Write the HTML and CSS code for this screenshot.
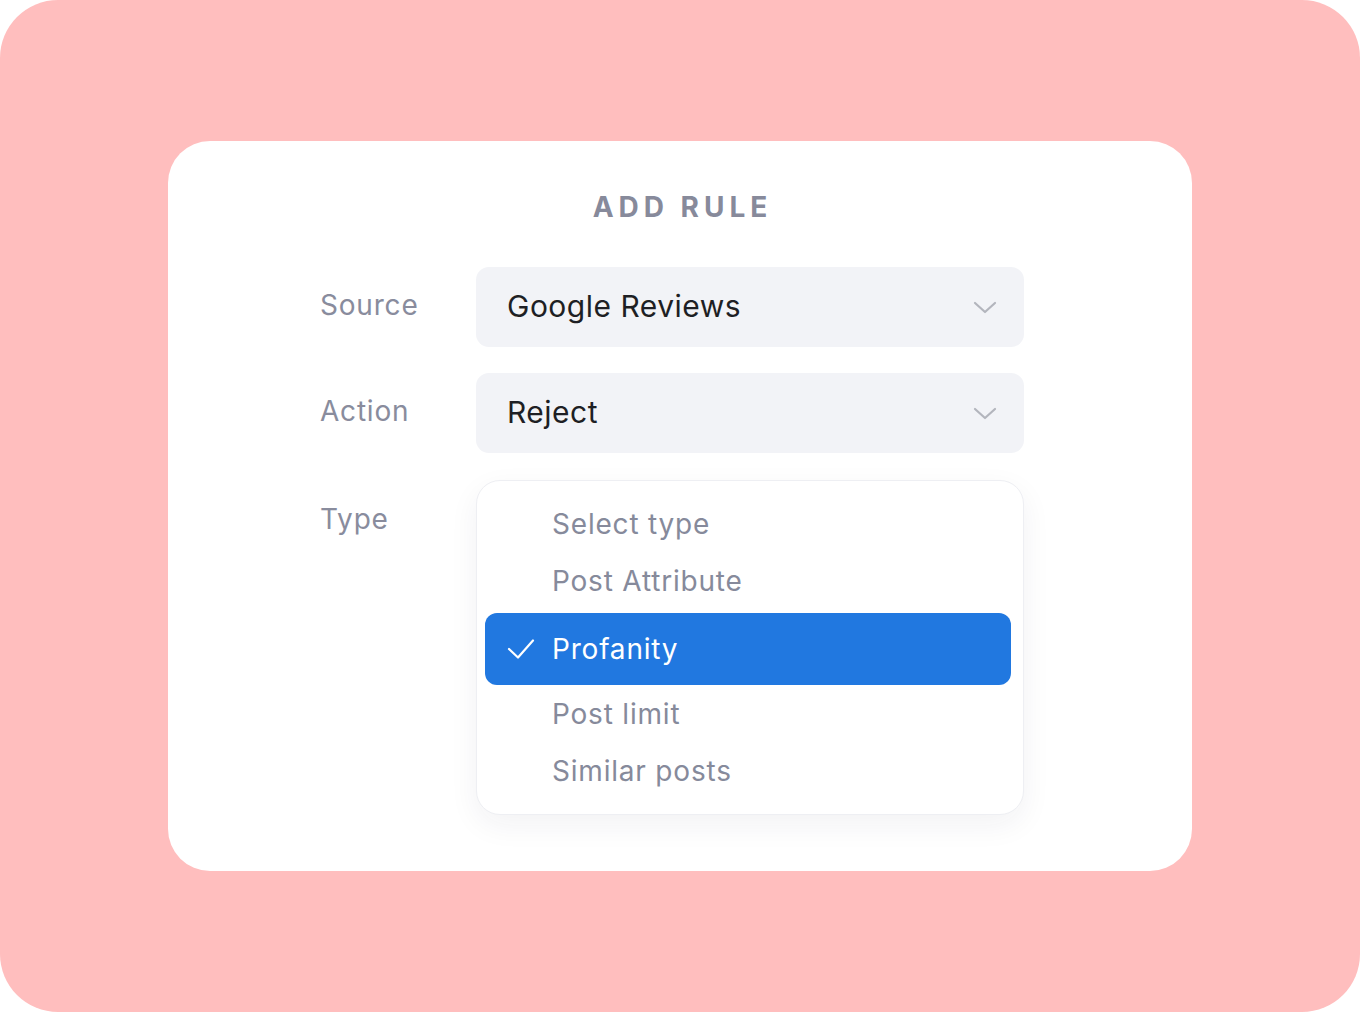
FILE: index.html
```html
<!DOCTYPE html>
<html>
<head>
<meta charset="utf-8">
<link rel="stylesheet" href="styles.css">
</head>
<body>
<div class="frame">
  <div class="card">
    <h1 class="title">ADD RULE</h1>
    <div class="form">
      <div class="label">Source</div>
      <div class="select">
        <span>Google Reviews</span>
        <svg class="chev" width="24" height="14" viewBox="0 0 24 14"><path d="M2 2 L12 11 L22 2" fill="none" stroke="#B3B5BD" stroke-width="2.2" stroke-linecap="round" stroke-linejoin="round"/></svg>
      </div>
      <div class="label">Action</div>
      <div class="select">
        <span>Reject</span>
        <svg class="chev" width="24" height="14" viewBox="0 0 24 14"><path d="M2 2 L12 11 L22 2" fill="none" stroke="#B3B5BD" stroke-width="2.2" stroke-linecap="round" stroke-linejoin="round"/></svg>
      </div>
      <div class="label type">Type</div>
      <div class="menu">
        <div class="opt">Select type</div>
        <div class="opt">Post Attribute</div>
        <div class="opt selected">
          <svg class="check" width="28" height="22" viewBox="0 0 28 22"><path d="M2 11 L11 19.5 L26 2.5" fill="none" stroke="#fff" stroke-width="2.2" stroke-linecap="round" stroke-linejoin="round"/></svg>
          <span>Profanity</span>
        </div>
        <div class="opt">Post limit</div>
        <div class="opt">Similar posts</div>
      </div>
    </div>
  </div>
</div>
</body>
</html>
```

FILE: styles.css
```css
* { box-sizing: border-box; }
html, body { margin: 0; padding: 0; background: #fff; }
body { font-family: Inter, "Noto Sans", sans-serif; }

.frame {
  width: 1360px;
  height: 1012px;
  background: #FFBEBE;
  border-radius: 58px;
  padding: 141px 168px 0 168px;
}

.card {
  width: 1024px;
  height: 730px;
  background: #fff;
  border-radius: 42px;
  padding: 48px 0 0 152px;
}

.title {
  margin: 0 0 0 -152px;
  text-align: center;
  font-size: 28px;
  font-weight: 700;
  letter-spacing: 5px;
  color: #878A9B;
  line-height: 36px;
  padding-left: 5px;
}

.form {
  margin-top: 42px;
  display: grid;
  grid-template-columns: 156px 548px;
  row-gap: 26px;
  align-items: start;
}

.label {
  font-size: 28px;
  height: 80px;
  line-height: 76px;
  letter-spacing: 0.8px;
  color: #898C9D;
}

.label.type { line-height: 80px; }

.select {
  height: 80px;
  background: #F2F3F7;
  border-radius: 13px;
  display: flex;
  align-items: center;
  justify-content: space-between;
  padding: 0 27px 3px 31px;
  font-size: 30px;
  letter-spacing: 0.5px;
  color: #1E1F24;
}

.chev { margin-top: 4px; }

.menu {
  margin-top: 1px;
  border: 1px solid #EEEFF3;
  border-radius: 24px;
  background: #fff;
  box-shadow: 0 10px 30px rgba(30, 35, 60, 0.06);
  padding: 14px 12px 15px 8px;
  display: flex;
  flex-direction: column;
}

.opt {
  height: 57px;
  display: flex;
  align-items: center;
  padding-left: 67px;
  font-size: 28px;
  letter-spacing: 0.8px;
  color: #868A9B;
}

.opt.selected {
  height: 72px;
  margin-top: 4px;
  background: #2178E0;
  border-radius: 12px;
  color: #fff;
  padding-left: 22px;
}

.check { margin-right: 17px; }
```
